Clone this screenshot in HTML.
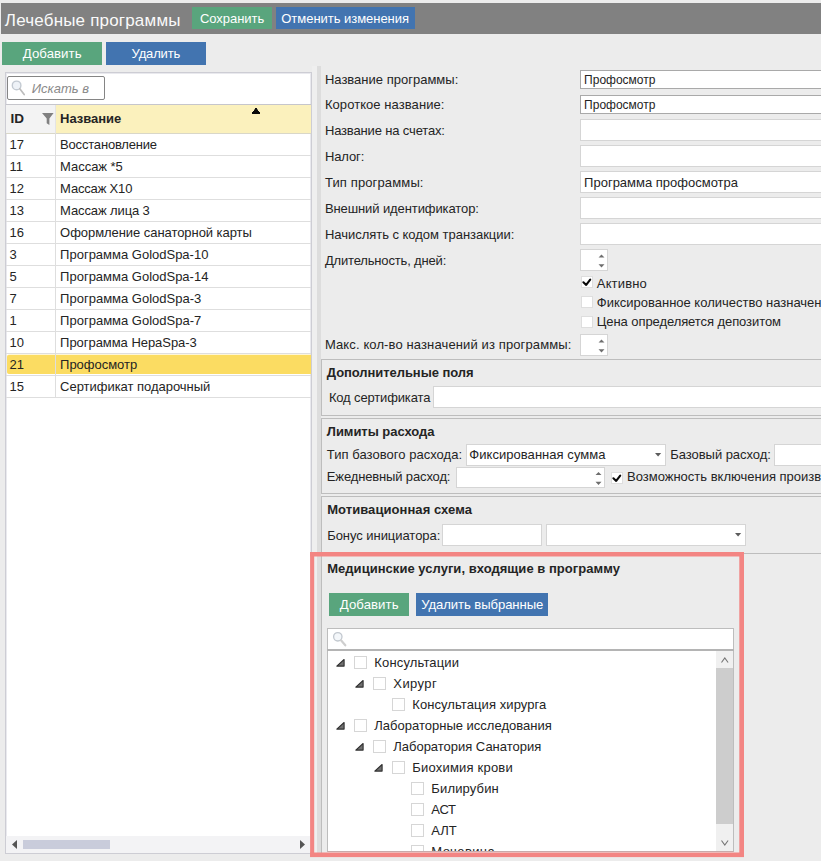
<!DOCTYPE html><html><head><meta charset="utf-8"><title>Лечебные программы</title><style>
html,body{margin:0;padding:0;}
body{width:821px;height:861px;overflow:hidden;background:#ececec;position:relative;font-family:"Liberation Sans",sans-serif;color:#242424;}
.a{position:absolute;box-sizing:border-box;}
.t{position:absolute;white-space:pre;line-height:20px;height:20px;display:block;}
.in{position:absolute;box-sizing:border-box;background:#fff;border:1px solid #d5d5d5;}
.ind{position:absolute;box-sizing:border-box;background:#fff;border:1px solid #a9a9a9;}
.cb{position:absolute;box-sizing:border-box;background:#fff;border:1px solid #cfcfcf;width:13px;height:13px;}
.c12{width:12px;height:12px;border-color:#dedede;}
.hl{position:absolute;height:1px;background:#d8d8d8;}
.gb{position:absolute;box-sizing:border-box;border:1px solid #bdbdbd;border-right:none;}
svg{position:absolute;overflow:visible;}
</style></head><body>
<div class="a" style="left:1px;top:3px;width:820px;height:31px;background:#818181;"></div>
<div class="a" style="left:192px;top:7px;width:80px;height:22px;background:#59a57d;"></div>
<div class="a" style="left:276px;top:7px;width:139px;height:22px;background:#4274b0;"></div>
<div class="a" style="left:2px;top:42px;width:100px;height:23px;background:#59a57d;"></div>
<div class="a" style="left:106px;top:42px;width:100px;height:23px;background:#4274b0;"></div>
<div class="a" style="left:5px;top:72px;width:307px;height:782px;background:#fff;border:1px solid #cdcdd4;box-shadow:inset 0 0 0 1px #e9e9ee;"></div>
<div class="hl" style="left:6px;top:104px;width:305px;background:#c6c6cc;"></div>
<div class="in" style="left:7px;top:76px;width:98px;height:24px;border:1px solid #858585;border-radius:2px;"></div>
<svg style="left:10px;top:79px" width="18" height="18" viewBox="0 0 18 18"><circle cx="6.6" cy="6.4" r="4.3" fill="#eef2f7" stroke="#c3cad2" stroke-width="1.4"/><path d="M9.8 9.8 L14.2 15.6" stroke="#bdbdbd" stroke-width="1.7" stroke-linecap="round"/></svg>
<div class="a" style="left:6px;top:105px;width:49px;height:28px;background:#f3f3f3;"></div>
<div class="a" style="left:55px;top:105px;width:256px;height:28px;background:#fbf1bd;border-left:1px solid #e4e4e4;"></div>
<div class="hl" style="left:6px;top:133px;width:305px;background:#d9d7c8;"></div>
<svg style="left:41.5px;top:113.4px" width="11.6" height="12" viewBox="0 0 11.6 12"><path d="M0 0 H11.6 L7.4 5.6 V12 L4.7 10.2 V5.6 Z" fill="#808080"/></svg>
<svg style="left:252px;top:108px" width="8" height="6" viewBox="0 0 8 6"><path d="M3 0 H5 V1.5 H6 V3 H7 V4 H8 V6 H0 V4 H1 V3 H2 V1.5 H3 Z" fill="#0a0a0a"/></svg>
<div class="hl" style="left:6px;top:155px;width:305px;background:#dedede;"></div>
<div class="hl" style="left:6px;top:177px;width:305px;background:#dedede;"></div>
<div class="hl" style="left:6px;top:199px;width:305px;background:#dedede;"></div>
<div class="hl" style="left:6px;top:221px;width:305px;background:#dedede;"></div>
<div class="hl" style="left:6px;top:243px;width:305px;background:#dedede;"></div>
<div class="hl" style="left:6px;top:265px;width:305px;background:#dedede;"></div>
<div class="hl" style="left:6px;top:287px;width:305px;background:#dedede;"></div>
<div class="hl" style="left:6px;top:309px;width:305px;background:#dedede;"></div>
<div class="hl" style="left:6px;top:331px;width:305px;background:#dedede;"></div>
<div class="hl" style="left:6px;top:353px;width:305px;background:#dedede;"></div>
<div class="a" style="left:7px;top:355px;width:304px;height:19px;background:#fbdc62;border-radius:2px 0 0 2px;box-shadow:0 -0.5px 0 #fdeeb0;"></div>
<div class="hl" style="left:6px;top:375px;width:305px;background:#dedede;"></div>
<div class="hl" style="left:6px;top:397px;width:305px;background:#dedede;"></div>
<div class="a" style="left:55px;top:133px;width:1px;height:264px;background:#dedede;"></div>
<div class="a" style="left:6px;top:836px;width:305px;height:17px;background:#f3f3f5;"></div>
<div class="a" style="left:23px;top:840px;width:87px;height:9px;background:#c9ccdb;"></div>
<svg style="left:12px;top:840px" width="5" height="9" viewBox="0 0 5 9"><path d="M5 0 V9 L0 4.5 Z" fill="#555"/></svg>
<svg style="left:300px;top:840px" width="5" height="9" viewBox="0 0 5 9"><path d="M0 0 V9 L5 4.5 Z" fill="#555"/></svg>
<div class="a" style="left:312px;top:66px;width:5px;height:788px;background:#efefef;"></div>
<div class="a" style="left:317px;top:66px;width:4px;height:788px;background:#dddddd;"></div>
<div class="ind" style="left:580px;top:70px;width:260px;height:19px;"></div>
<div class="ind" style="left:580px;top:95px;width:260px;height:19px;"></div>
<div class="in" style="left:580px;top:119px;width:260px;height:22px;"></div>
<div class="in" style="left:580px;top:145px;width:260px;height:22px;"></div>
<div class="in" style="left:580px;top:171px;width:260px;height:22px;"></div>
<div class="in" style="left:580px;top:197px;width:260px;height:22px;"></div>
<div class="in" style="left:580px;top:223px;width:260px;height:22px;"></div>
<div class="in" style="left:580px;top:249px;width:28px;height:22px;"></div>
<svg style="left:597.5px;top:253px" width="7" height="15" viewBox="0 0 7 14"><path d="M3.5 1 L6.5 4.1 H0.5 Z M3.5 14.1 L6.5 10.8 H0.5 Z" fill="#6e6e6e"/></svg>
<div class="in" style="left:580px;top:334px;width:28px;height:22px;"></div>
<svg style="left:597.5px;top:338px" width="7" height="15" viewBox="0 0 7 14"><path d="M3.5 1 L6.5 4.1 H0.5 Z M3.5 14.1 L6.5 10.8 H0.5 Z" fill="#6e6e6e"/></svg>
<div class="cb c12" style="left:581px;top:276px;"><svg style="left:-1px;top:-1px" width="12" height="12" viewBox="0 0 12 12"><path d="M2.4 6.3 L5.2 8.9 L9.2 3.7" fill="none" stroke="#080808" stroke-width="2.1" stroke-linecap="round" stroke-linejoin="round"/></svg></div>
<div class="cb c12" style="left:581px;top:296px;"></div>
<div class="cb c12" style="left:581px;top:316px;"></div>
<div class="gb" style="left:321px;top:359px;width:500px;height:57px;"></div>
<div class="gb" style="left:321px;top:418px;width:500px;height:76px;"></div>
<div class="gb" style="left:321px;top:496px;width:500px;height:58px;"></div>
<div class="gb" style="left:321px;top:555px;width:500px;height:299px;border-top:none;border-bottom:none;"></div>
<div class="in" style="left:433px;top:386px;width:400px;height:22px;"></div>
<div class="in" style="left:466px;top:444px;width:200px;height:22px;"></div>
<svg style="left:655px;top:453px" width="6.2" height="3.6" viewBox="0 0 6.2 3.6"><path d="M0 0 H6.2 L3.1 3.6 Z" fill="#5c5c5c"/></svg>
<div class="in" style="left:774px;top:444px;width:60px;height:22px;"></div>
<div class="in" style="left:455.5px;top:467px;width:149.5px;height:21px;"></div>
<svg style="left:594.5px;top:470.8px" width="7" height="14" viewBox="0 0 7 14"><path d="M3.5 1 L6.5 4.1 H0.5 Z M3.5 14.1 L6.5 10.8 H0.5 Z" fill="#6e6e6e"/></svg>
<div class="cb c12" style="left:611px;top:472px;"><svg style="left:-1px;top:-1px" width="12" height="12" viewBox="0 0 12 12"><path d="M2.4 6.3 L5.2 8.9 L9.2 3.7" fill="none" stroke="#080808" stroke-width="2.1" stroke-linecap="round" stroke-linejoin="round"/></svg></div>
<div class="in" style="left:442px;top:524px;width:99.5px;height:22px;"></div>
<div class="in" style="left:546px;top:524px;width:199.5px;height:22px;"></div>
<svg style="left:734.5px;top:533.3px" width="6.2" height="3.6" viewBox="0 0 6.2 3.6"><path d="M0 0 H6.2 L3.1 3.6 Z" fill="#5c5c5c"/></svg>
<div class="a" style="left:329px;top:593px;width:80px;height:23px;background:#59a57d;"></div>
<div class="a" style="left:416px;top:593px;width:132px;height:23px;background:#4274b0;"></div>
<div class="a" style="left:327px;top:628px;width:407px;height:224px;background:#fff;border:1px solid #bdbdbd;border-bottom-color:#c8aaaa;"></div>
<div class="hl" style="left:327px;top:649px;width:407px;height:2px;background:#b4b4b4;"></div>
<svg style="left:332px;top:631px" width="16" height="17" viewBox="0 0 16 17"><circle cx="5.8" cy="5.8" r="4.2" fill="#f4f7fa" stroke="#c2c8cf" stroke-width="1.3"/><path d="M9 9.3 L13.3 14.3" stroke="#cfcfcf" stroke-width="2.2" stroke-linecap="round"/></svg>
<div class="a" style="left:716px;top:651px;width:17px;height:200px;background:#f0f0f0;"></div>
<div class="a" style="left:716px;top:668px;width:17px;height:156px;background:#cdcdcd;"></div>
<svg style="left:720.6px;top:656.8px" width="7.6" height="6" viewBox="0 0 7.6 6"><path d="M0.5 5.5 L3.8 1 L7.1 5.5" fill="none" stroke="#757575" stroke-width="1.1"/></svg>
<svg style="left:720.6px;top:839.5px" width="7.6" height="6" viewBox="0 0 7.6 6"><path d="M0.5 0.5 L3.8 5 L7.1 0.5" fill="none" stroke="#757575" stroke-width="1.1"/></svg>
<div class="a" style="left:328px;top:651px;width:388px;height:200px;overflow:hidden;">
<svg style="left:7.0px;top:7.3px" width="10" height="9" viewBox="0 0 10 9"><path d="M9.1 1.5 V8.1 H1.8 Z" fill="#707070" stroke="#303030" stroke-width="1.1" stroke-linejoin="round"/></svg>
<div class="cb" style="left:25.5px;top:4.5px;border-color:#d6d6d6;"></div>
<svg style="left:26.0px;top:28.3px" width="10" height="9" viewBox="0 0 10 9"><path d="M9.1 1.5 V8.1 H1.8 Z" fill="#707070" stroke="#303030" stroke-width="1.1" stroke-linejoin="round"/></svg>
<div class="cb" style="left:44.5px;top:25.5px;border-color:#d6d6d6;"></div>
<div class="cb" style="left:63.5px;top:46.5px;border-color:#d6d6d6;"></div>
<svg style="left:7.0px;top:70.3px" width="10" height="9" viewBox="0 0 10 9"><path d="M9.1 1.5 V8.1 H1.8 Z" fill="#707070" stroke="#303030" stroke-width="1.1" stroke-linejoin="round"/></svg>
<div class="cb" style="left:25.5px;top:67.5px;border-color:#d6d6d6;"></div>
<svg style="left:26.0px;top:91.3px" width="10" height="9" viewBox="0 0 10 9"><path d="M9.1 1.5 V8.1 H1.8 Z" fill="#707070" stroke="#303030" stroke-width="1.1" stroke-linejoin="round"/></svg>
<div class="cb" style="left:44.5px;top:88.5px;border-color:#d6d6d6;"></div>
<svg style="left:45.0px;top:112.3px" width="10" height="9" viewBox="0 0 10 9"><path d="M9.1 1.5 V8.1 H1.8 Z" fill="#707070" stroke="#303030" stroke-width="1.1" stroke-linejoin="round"/></svg>
<div class="cb" style="left:63.5px;top:109.5px;border-color:#d6d6d6;"></div>
<div class="cb" style="left:82.5px;top:130.5px;border-color:#d6d6d6;"></div>
<div class="cb" style="left:82.5px;top:151.5px;border-color:#d6d6d6;"></div>
<div class="cb" style="left:82.5px;top:172.5px;border-color:#d6d6d6;"></div>
<div class="cb" style="left:82.5px;top:193.5px;border-color:#d6d6d6;"></div>
<span class="t" style="left:46.3px;top:1.5px;font-size:13px;letter-spacing:0.150px;">Консультации</span>
<span class="t" style="left:65.3px;top:22.5px;font-size:13px;letter-spacing:0.411px;">Хирург</span>
<span class="t" style="left:84.3px;top:43.5px;font-size:13px;letter-spacing:0.076px;">Консультация хирурга</span>
<span class="t" style="left:46.3px;top:64.5px;font-size:13px;letter-spacing:0.003px;">Лабораторные исследования</span>
<span class="t" style="left:65.3px;top:85.5px;font-size:13px;letter-spacing:-0.018px;">Лаборатория Санатория</span>
<span class="t" style="left:84.3px;top:106.5px;font-size:13px;letter-spacing:0.199px;">Биохимия крови</span>
<span class="t" style="left:103.3px;top:127.5px;font-size:13px;letter-spacing:0.154px;">Билирубин</span>
<span class="t" style="left:103.3px;top:148.5px;font-size:13px;letter-spacing:-0.298px;">АСТ</span>
<span class="t" style="left:103.3px;top:169.5px;font-size:13px;letter-spacing:-0.019px;">АЛТ</span>
<span class="t" style="left:103.3px;top:190.5px;font-size:13px;letter-spacing:0.414px;">Мочевина</span>
</div>
<span class="t" style="left:4.8px;top:11.3px;font-size:17px;letter-spacing:0.187px;color:#fafafa;">Лечебные программы</span>
<span class="t" style="left:199.9px;top:8.5px;font-size:13px;letter-spacing:-0.026px;color:#fff;">Сохранить</span>
<span class="t" style="left:281.3px;top:8.5px;font-size:13px;letter-spacing:-0.035px;color:#fff;">Отменить изменения</span>
<span class="t" style="left:22.8px;top:44.0px;font-size:13.2px;letter-spacing:0.060px;color:#fff;">Добавить</span>
<span class="t" style="left:131.6px;top:44.0px;font-size:13px;letter-spacing:-0.157px;color:#fff;">Удалить</span>
<span class="t" style="left:31.8px;top:78.5px;font-size:13px;letter-spacing:-0.005px;color:#8a8a8a;font-style:italic;">Искать в</span>
<span class="t" style="left:10.6px;top:109.0px;font-size:13.5px;letter-spacing:0.000px;font-weight:bold;">ID</span>
<span class="t" style="left:60.1px;top:109.0px;font-size:13px;letter-spacing:-0.025px;font-weight:bold;">Название</span>
<span class="t" style="left:9.6px;top:135.0px;font-size:13px;letter-spacing:0.000px;">17</span>
<span class="t" style="left:60.1px;top:135.0px;font-size:13px;letter-spacing:-0.189px;">Восстановление</span>
<span class="t" style="left:9.6px;top:157.0px;font-size:13px;letter-spacing:0.000px;">11</span>
<span class="t" style="left:60.1px;top:157.0px;font-size:13px;letter-spacing:-0.043px;">Массаж *5</span>
<span class="t" style="left:9.6px;top:179.0px;font-size:13px;letter-spacing:0.000px;">12</span>
<span class="t" style="left:60.1px;top:179.0px;font-size:13px;letter-spacing:-0.175px;">Массаж X10</span>
<span class="t" style="left:9.6px;top:201.0px;font-size:13px;letter-spacing:0.000px;">13</span>
<span class="t" style="left:60.1px;top:201.0px;font-size:13px;letter-spacing:-0.117px;">Массаж лица 3</span>
<span class="t" style="left:9.6px;top:223.0px;font-size:13px;letter-spacing:0.000px;">16</span>
<span class="t" style="left:60.1px;top:223.0px;font-size:13px;letter-spacing:-0.056px;">Оформление санаторной карты</span>
<span class="t" style="left:9.6px;top:245.0px;font-size:13px;letter-spacing:0.000px;">3</span>
<span class="t" style="left:60.1px;top:245.0px;font-size:13px;letter-spacing:-0.002px;">Программа GolodSpa-10</span>
<span class="t" style="left:9.6px;top:267.0px;font-size:13px;letter-spacing:0.000px;">5</span>
<span class="t" style="left:60.1px;top:267.0px;font-size:13px;letter-spacing:-0.002px;">Программа GolodSpa-14</span>
<span class="t" style="left:9.6px;top:289.0px;font-size:13px;letter-spacing:0.000px;">7</span>
<span class="t" style="left:60.1px;top:289.0px;font-size:13px;letter-spacing:0.005px;">Программа GolodSpa-3</span>
<span class="t" style="left:9.6px;top:311.0px;font-size:13px;letter-spacing:0.000px;">1</span>
<span class="t" style="left:60.1px;top:311.0px;font-size:13px;letter-spacing:0.005px;">Программа GolodSpa-7</span>
<span class="t" style="left:9.6px;top:333.0px;font-size:13px;letter-spacing:0.000px;">10</span>
<span class="t" style="left:60.1px;top:333.0px;font-size:13px;letter-spacing:-0.044px;">Программа HepaSpa-3</span>
<span class="t" style="left:9.6px;top:355.0px;font-size:13px;letter-spacing:0.000px;">21</span>
<span class="t" style="left:60.1px;top:355.0px;font-size:13px;letter-spacing:-0.022px;">Профосмотр</span>
<span class="t" style="left:9.6px;top:377.0px;font-size:13px;letter-spacing:0.000px;">15</span>
<span class="t" style="left:60.1px;top:377.0px;font-size:13px;letter-spacing:-0.028px;">Сертификат подарочный</span>
<span class="t" style="left:324.9px;top:69.5px;font-size:13px;letter-spacing:0.008px;">Название программы:</span>
<span class="t" style="left:324.9px;top:95.0px;font-size:13px;letter-spacing:0.068px;">Короткое название:</span>
<span class="t" style="left:324.9px;top:121.0px;font-size:13px;letter-spacing:-0.151px;">Название на счетах:</span>
<span class="t" style="left:324.9px;top:147.0px;font-size:13px;letter-spacing:-0.107px;">Налог:</span>
<span class="t" style="left:324.9px;top:173.0px;font-size:13px;letter-spacing:0.136px;">Тип программы:</span>
<span class="t" style="left:324.9px;top:199.0px;font-size:13px;letter-spacing:-0.098px;">Внешний идентификатор:</span>
<span class="t" style="left:324.9px;top:225.0px;font-size:13px;letter-spacing:-0.023px;">Начислять с кодом транзакции:</span>
<span class="t" style="left:324.9px;top:251.0px;font-size:13px;letter-spacing:-0.164px;">Длительность, дней:</span>
<span class="t" style="left:324.9px;top:335.0px;font-size:13px;letter-spacing:0.122px;">Макс. кол-во назначений из программы:</span>
<span class="t" style="left:584.1px;top:70.0px;font-size:12px;letter-spacing:-0.007px;">Профосмотр</span>
<span class="t" style="left:584.1px;top:95.0px;font-size:12px;letter-spacing:-0.007px;">Профосмотр</span>
<span class="t" style="left:584.1px;top:172.5px;font-size:13px;letter-spacing:-0.003px;">Программа профосмотра</span>
<span class="t" style="left:596.8px;top:273.5px;font-size:13px;letter-spacing:0.159px;">Активно</span>
<span class="t" style="left:596.8px;top:292.5px;font-size:13px;letter-spacing:-0.004px;">Фиксированное количество назначен</span>
<span class="t" style="left:596.8px;top:312.0px;font-size:13px;letter-spacing:-0.078px;">Цена определяется депозитом</span>
<span class="t" style="left:326.8px;top:363.3px;font-size:13px;letter-spacing:-0.066px;font-weight:bold;">Дополнительные поля</span>
<span class="t" style="left:328.9px;top:387.5px;font-size:13px;letter-spacing:-0.145px;">Код сертификата</span>
<span class="t" style="left:326.8px;top:422.2px;font-size:13px;letter-spacing:-0.039px;font-weight:bold;">Лимиты расхода</span>
<span class="t" style="left:326.8px;top:445.0px;font-size:13px;letter-spacing:0.038px;">Тип базового расхода:</span>
<span class="t" style="left:469.3px;top:445.0px;font-size:13px;letter-spacing:0.045px;">Фиксированная сумма</span>
<span class="t" style="left:670.3px;top:445.0px;font-size:13px;letter-spacing:-0.054px;">Базовый расход:</span>
<span class="t" style="left:326.8px;top:467.2px;font-size:13px;letter-spacing:-0.140px;">Ежедневный расход:</span>
<span class="t" style="left:627.0px;top:467.2px;font-size:13px;letter-spacing:-0.000px;">Возможность включения произв</span>
<span class="t" style="left:327.2px;top:500.1px;font-size:13px;letter-spacing:0.061px;font-weight:bold;">Мотивационная схема</span>
<span class="t" style="left:327.2px;top:525.8px;font-size:13px;letter-spacing:-0.048px;">Бонус инициатора:</span>
<span class="t" style="left:327.2px;top:558.7px;font-size:13px;letter-spacing:0.035px;font-weight:bold;">Медицинские услуги, входящие в программу</span>
<span class="t" style="left:339.8px;top:595.0px;font-size:13.2px;letter-spacing:0.060px;color:#fff;">Добавить</span>
<span class="t" style="left:421.3px;top:595.0px;font-size:13.1px;letter-spacing:-0.076px;color:#fff;">Удалить выбранные</span>
<svg style="left:0;top:0" width="821" height="861" viewBox="0 0 821 861"><g fill="#f38583"><rect x="310.1" y="552" width="433.9" height="4.5"/><rect x="310.1" y="852.5" width="433.9" height="4.6"/><rect x="310.1" y="552" width="4.1" height="304.8"/><rect x="739.3" y="552" width="4.7" height="304.8"/></g></svg>
</body></html>
